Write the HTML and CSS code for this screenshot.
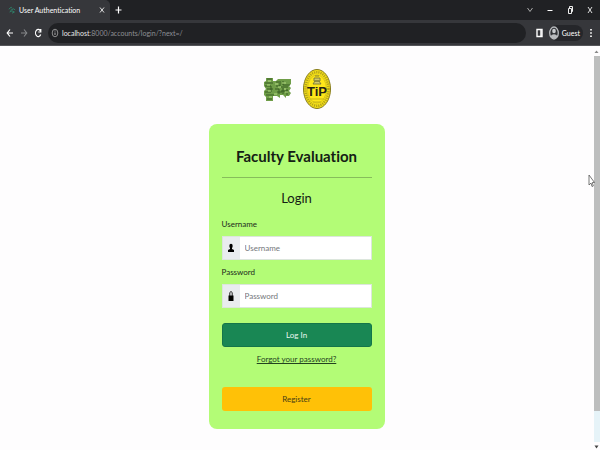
FILE: index.html
```html
<!DOCTYPE html>
<html lang="en">
<head>
<meta charset="utf-8">
<title>User Authentication</title>
<link rel="stylesheet" href="styles.css">
</head>
<body>
<header class="browser">
  <div class="tabs">
    <div class="tab">
      <svg class="favicon" viewBox="0 0 10 10"><path d="M1 4 4 1.500 5 3M3 5.500 7 3.500 9 5M2 7.500 5 6 8 7.500 5 9" fill="none" stroke="#2f8068" stroke-width="1.2"/></svg>
      <span class="tab-title">User Authentication</span>
      <button class="icon-button" aria-label="Close tab"><svg width="6" height="8" viewBox="0 0 6 8"><path d="M1 1.500 5 6.500M5 1.500 1 6.500" stroke="#ddd" stroke-width="1"/></svg></button>
    </div>
    <button class="icon-button new-tab" aria-label="New tab"><svg width="7" height="8" viewBox="0 0 7 8"><path d="M3.500 0.500V7.500M0.500 4H6.500" stroke="#fff" stroke-width="1.2"/></svg></button>
    <div class="window-controls">
      <button class="icon-button" aria-label="Search tabs"><svg width="8" height="8" viewBox="0 0 8 8"><path d="M1.500 2 4 5.500 6.500 2" fill="none" stroke="#aaa"/></svg></button>
      <button class="icon-button" aria-label="Minimize"><svg width="8" height="8" viewBox="0 0 8 8"><path d="M1.500 4.500H6.500" stroke="#fff"/></svg></button>
      <button class="icon-button" aria-label="Restore"><svg width="8" height="8" viewBox="0 0 8 8"><path d="M2.500 2.500H5.500V7.500H2.500ZM3.500 2.500V0.500H6.500V5.500H5.500" fill="none" stroke="#eee"/></svg></button>
      <button class="icon-button" aria-label="Close"><svg width="8" height="8" viewBox="0 0 8 8"><path d="M2 1 6 7M6 1 2 7" stroke="#ddd"/></svg></button>
    </div>
  </div>
  <div class="toolbar">
    <button class="icon-button" aria-label="Back"><svg width="8" height="10" viewBox="0 0 8 10"><path d="M7 5H1.500M4 1.500 1.200 5 4 8.500" fill="none" stroke="#fff" stroke-width="1.2"/></svg></button>
    <button class="icon-button" aria-label="Forward"><svg width="8" height="10" viewBox="0 0 8 10"><path d="M1 5H6.500M4 1.500 6.800 5 4 8.500" fill="none" stroke="#85878a" stroke-width="1.100"/></svg></button>
    <button class="icon-button" aria-label="Reload"><svg width="8" height="10" viewBox="0 0 8 10"><path d="M6.500 3A2.700 3.600 0 1 0 6.700 6.500M6.800 1V4H4.300" fill="none" stroke="#fff" stroke-width="1.200"/></svg></button>
    <div class="address">
      <svg width="8" height="10" viewBox="0 0 8 10"><ellipse cx="4" cy="5" rx="2.800" ry="3.800" fill="none" stroke="#999" stroke-width="0.900"/><path d="M4 4.500V7M4 2.500V3.500" stroke="#aaa"/></svg>
      <span class="url"><b>localhost</b>:8000/accounts/login/?next=/</span>
    </div>
    <button class="icon-button" aria-label="Side panel"><svg width="7" height="10" viewBox="0 0 7 10"><path d="M1 1.500H6V8.500H1Z" fill="none" stroke="#fff" stroke-width="1.400"/><path d="M5 1V9" stroke="#fff" stroke-width="1.500"/></svg></button>
    <button class="profile"><svg width="10" height="14" viewBox="0 0 10 14"><ellipse cx="5" cy="7" rx="4.300" ry="6" fill="#303236" stroke="#b9bbbe" stroke-width="1.300"/><ellipse cx="5" cy="5" rx="1.800" ry="2.200" fill="#c9cbce"/><path d="M1.700 10.500C2.500 7.500 7.500 7.500 8.300 10.500L6.500 12.500H3.500Z" fill="#b9bbbe"/></svg>Guest</button>
    <button class="icon-button" aria-label="Menu"><svg width="4" height="10" viewBox="0 0 4 10"><path d="M1 1H3V2.500H1ZM1 4.200H3V5.700H1ZM1 7.500H3V9H1Z" fill="#ddd"/></svg></button>
  </div>
</header>
<div class="viewport">
  <main class="page">
    <div class="logos">
      <svg width="28" height="25" viewBox="0 0 28 25" role="img" aria-label="Circuit logo">
        <path d="M2 1H9V4H12L14 2H27V7L25 9L27 11L25 14L27 16L25 19H22V21L19 18H16V21L13 19H9V24H2V20L0 18V14L2 12L0 9V5L2 4Z" fill="#6f9d48"/>
        <path d="M3 2H8M1 6H9M1 9H7V15H1M3 12H9M2 18H10M3 22H8M12 5H17M19 4V8H26M12 9H16V6M11 12H15V17M17 10H24M17 14H24M19 11V17M23 12V18M13 15H18" fill="none" stroke="#31551f" stroke-width="0.900"/>
        <path d="M4 4H7M3 8H6M11 7H14M14 10H17M18 6H22M20 12H22M4 14H7M10 17H13M5 20H8M21 15H24" stroke="#b4d982" stroke-width="1.200"/>
      </svg>
      <svg width="30" height="42" viewBox="0 0 30 42" role="img" aria-label="TIP seal">
        <ellipse cx="15" cy="21" rx="13.500" ry="19.500" fill="#f4df17" stroke="#857a1d"/>
        <ellipse cx="15" cy="21" rx="11.500" ry="16.800" fill="none" stroke="#b3a21b" stroke-width="2.500" stroke-dasharray="1.200 1"/>
        <ellipse cx="15" cy="21" rx="9.500" ry="14" fill="#ffe719" stroke="#c1af1a" stroke-width="0.600"/>
        <path d="M12 10H18V13H12ZM11 16 13 13H17L19 16ZM13 8H17" fill="#d5ca68" stroke="#777736" stroke-width="0.900"/>
        <path d="M8 31H22M11 34H19" stroke="#c7b51b"/>
        <text x="15" y="28" text-anchor="middle" class="seal-text">TiP</text>
      </svg>
    </div>
    <form class="card">
      <h1>Faculty Evaluation</h1>
      <hr>
      <h2>Login</h2>
      <label for="username">Username</label>
      <div class="field">
        <span class="addon"><svg width="8" height="10" viewBox="0 0 8 10"><ellipse cx="4" cy="3" rx="1.700" ry="2.200"/><path d="M3 4H5V6L7 7V9H1V7L3 6Z"/></svg></span>
        <input id="username" type="text" placeholder="Username">
      </div>
      <label for="password">Password</label>
      <div class="field">
        <span class="addon"><svg width="8" height="12" viewBox="0 0 8 12"><path d="M2.800 6V2.500Q4 0.500 5.200 2.500V6" fill="none" stroke="#222"/><path d="M1.500 5.500H6.500V11H1.500Z"/></svg></span>
        <input id="password" type="password" placeholder="Password">
      </div>
      <button class="button login" type="submit">Log In</button>
      <a class="forgot" href="#">Forgot your password?</a>
      <button class="button register" type="button">Register</button>
    </form>
  </main>
  <div class="scrollbar">
    <svg width="7" height="6" viewBox="0 0 7 6"><path d="M1.500 4 3.500 1.500 5.500 4Z" fill="#888"/></svg>
    <div class="track"><div class="thumb"></div></div>
    <svg width="7" height="6" viewBox="0 0 7 6"><path d="M1.500 1.500H5.500L3.500 4.500Z" fill="#444"/></svg>
  </div>
</div>
<svg class="pointer" width="7" height="14" viewBox="0 0 7 14"><path d="M1 1V11L3 9L4 12.500L5.300 12L4.300 8.500H6.500Z" fill="#fff" stroke="#555" stroke-width="0.800"/></svg>
</body>
</html>
```
FILE: styles.css
```css
* { box-sizing: border-box; }
body {
  margin: 0;
  min-height: 100vh;
  display: flex;
  flex-direction: column;
  background: #fefdfe;
  color: #1c2a1c;
  font: 8px/12px Lato, sans-serif;
  font-variant-ligatures: none;
}
button, input { font: inherit; color: inherit; border: 0; padding: 0; margin: 0; }
svg { display: block; flex: none; }
.icon-button { background: none; display: block; }

.browser { background: #36373b; color: #fff; border-bottom: 1px solid #55565a; font-size: 7px; line-height: 10px; }
.tabs { display: flex; align-items: center; height: 20px; background: #202124; }
.tab { display: flex; align-items: center; gap: 3px; width: 110px; height: 20px; padding: 0 5px 0 8px; background: #36373b; border-radius: 0 5px 0 0; }
.favicon { width: 8px; height: 10px; }
.tab-title { flex: 1; white-space: nowrap; }
.new-tab { margin-left: 5px; }
.window-controls { display: flex; gap: 12px; margin-left: auto; padding-right: 6px; }
.toolbar { display: flex; align-items: center; gap: 6px; height: 25px; padding: 0 7px 0 6px; }
.address { display: flex; align-items: center; gap: 3px; flex: 1; height: 20px; margin-right: 4px; padding: 0 3px; background: #202124; border-radius: 10px; color: #8e9094; }
.url b { color: #e8e8e8; font-weight: 400; }
.profile { display: flex; align-items: center; gap: 3px; height: 16px; padding-right: 3px; border-radius: 8px; background: #25262a; color: #fff; }

.viewport { flex: 1; display: flex; }
.page { flex: 1; display: flex; flex-direction: column; align-items: center; padding: 22px 12px; }
.logos { display: flex; align-items: center; gap: 10px; padding-left: 2px; }
.seal-text { font: bold 13px "Liberation Sans", sans-serif; fill: #252414; }
.card { display: flex; flex-direction: column; width: 100%; max-width: 176px; margin-top: 14px; padding: 20px 13px 18px; background: #b3fc76; border-radius: 8px; }
h1, h2 { margin: 0; text-align: center; color: #142014; }
h1 { font-size: 15px; line-height: 24px; white-space: nowrap; }
hr { width: 100%; height: 1px; margin: 9px 0; border: 0; background: #87bd5b; }
h2 { font-size: 13px; line-height: 22px; font-weight: 400; margin-bottom: 9px; }
label { line-height: 12px; margin-bottom: 6px; }
.field { display: flex; height: 24px; margin-bottom: 6px; background: #fff; border: 1px solid #dce6dc; }
.addon { display: flex; align-items: center; justify-content: center; width: 17px; background: #e9ecef; }
.field input { flex: 1; min-width: 0; padding: 0 5px; background: #fff; }
.field input::placeholder { color: #74777b; opacity: 1; }
.button { height: 24px; border-radius: 3px; }
.login { margin-top: 9px; background: #198754; border: 1px solid #14754a; color: #e9f7ef; }
.forgot { align-self: center; margin: 6px 0 22px; color: #23421f; text-decoration: underline; }
.register { background: #ffc107; color: #473d16; }
.scrollbar { display: flex; flex-direction: column; width: 7px; padding: 3px 0 1px; }
.track { flex: 1; background: #e6f3f8; margin: 1px 0 2px 1px; }
.thumb { height: 92%; background: #bdbebe; }
.pointer { position: absolute; left: 98%; top: 174px; }
```
